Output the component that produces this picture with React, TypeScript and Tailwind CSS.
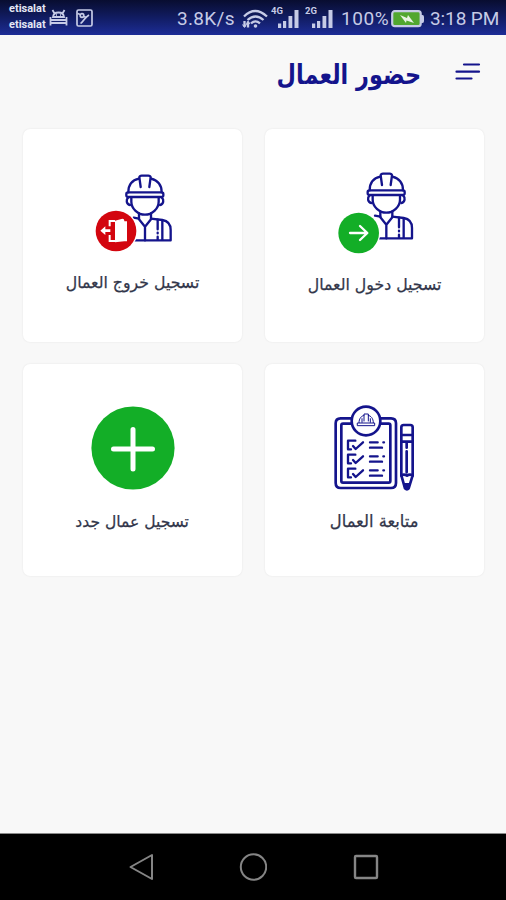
import type { ReactNode } from 'react';

const NAVY = '#14148c';

function Worker() {
  return (
    <g fill="none" stroke={NAVY} strokeWidth="7" strokeLinejoin="round" strokeLinecap="round">
      {/* helmet */}
      <path d="M144 97 C144 74 157 60 176 56 M212 56 C232 61 244 76 244 97" />
      <path d="M181 81 L177 52 Q178 47 184 47 H204 Q210 47 211 52 L207 81" />
      <rect x="138" y="97" width="111" height="14" rx="5" />
      {/* head */}
      <path d="M153 112 V125 C153 146 173 164 194 164 C215 164 235 146 235 125 V112" />
      <path d="M144 112 C136 119 138 133 149 135 M244 112 C252 119 250 133 239 135" />
      {/* jacket */}
      <path d="M176 160 V178 L194 200 L212 178 V160 M194 200 V241" />
      <path d="M160 173 L176 176 M212 176 L246 180 C264 183 271 194 271 210 V241 H160" />
      <path d="M232 179 V208 M232 218 V220 M232 230 V239 M246 182 V239" />
    </g>
  );
}

function EnterIcon() {
  return (
    <svg width="84" height="84" viewBox="29 30 252 252">
      <g transform="translate(-11 -6)">
        <Worker />
      </g>
      <circle cx="100" cy="219" r="65" fill="#fff" />
      <circle cx="100" cy="219" r="61" fill="#13ae27" />
      <path d="M74 219 H125 M104 198 L126 219 L104 240" fill="none" stroke="#fff" strokeWidth="7" strokeLinecap="round" strokeLinejoin="round" />
    </svg>
  );
}

function ExitIcon() {
  return (
    <svg width="84" height="84" viewBox="35 36 252 252">
      <Worker />
      <circle cx="107" cy="213" r="65" fill="#fff" />
      <circle cx="107" cy="213" r="61" fill="#d3060f" />
      <path d="M104 182 L126 176 Q132 176 132 182 V184 H140 V244 H132 L104 247 Z" fill="#fff" />
      <path d="M104 183 H88 V199 M88 225 V243 H104" fill="none" stroke="#fff" strokeWidth="6" />
      <path d="M60 212 L75 199 V208 H90 V216 H75 V225 Z" fill="#fff" />
    </svg>
  );
}

function ClipboardIcon() {
  return (
    <svg width="84" height="88" viewBox="37 24 252 264" fill="none" stroke={NAVY} strokeWidth="8" strokeLinecap="round" strokeLinejoin="round">
      <path d="M94 70 H60 Q45 70 45 85 V264 Q45 279 60 279 H211 Q226 279 226 264 V85 Q226 70 211 70 H178" />
      <path d="M94 86 H67 Q62 86 62 91 V258 Q62 263 67 263 H204 Q209 263 209 258 V91 Q209 86 204 86 H178" />
      <circle cx="136" cy="78" r="43" fill="#fff" />
      {/* small helmet in the badge */}
      <path d="M115 83 C115 70 122 63 130 61 M143 61 C151 63 158 70 158 83 M130 78 V57 H143 V78 M124 82 V71 M149 82 V71" strokeWidth="3" />
      <path d="M111 84 H162 V92 H111 Z" strokeWidth="3" />
      {[137, 179, 221].map((y) => (
        <g key={y} strokeWidth="7">
          <path d={`M104 ${y} H82 V${y + 26} H91`} />
          <path d={`M97 ${y + 16} L105 ${y + 25} L127 ${y + 5}`} />
          <path d={`M148 ${y + 5} H171 M188 ${y + 5} h2 M148 ${y + 21} H184`} />
        </g>
      ))}
      {/* pencil */}
      <path d="M242 242 V97 Q242 90 249 90 H269 Q276 90 276 97 V242 M242 120 H276 M242 140 H276" />
      <path d="M242 241 L253 280 Q259 286 264 280 L276 241 Q267 236 259 242 Q250 236 242 241 Z M251 268 H267 M258 142 V158 M258 169 V232" />
      <path d="M254 269 L259 280 L264 269 Z" fill={NAVY} />
    </svg>
  );
}

function PlusIcon() {
  return (
    <svg width="84" height="84" viewBox="0 0 84 84">
      <circle cx="42" cy="42" r="41.6" fill="#13ae27" />
      <path d="M42 23.5 V63 M22.5 43 H61.5" stroke="#fff" strokeWidth="5" strokeLinecap="round" />
    </svg>
  );
}

function Signal({ label }: { label: string }) {
  return (
    <svg width="30" height="26" viewBox="0 0 30 26" fill="#c6cbe6">
      <text x="0" y="8" fontFamily="Roboto, sans-serif" fontSize="9.5" fontWeight="700">{label}</text>
      <rect x="7" y="17.5" width="3.2" height="4.5" />
      <rect x="12" y="15" width="3.2" height="7" />
      <rect x="17.5" y="10" width="3.8" height="12" />
      <rect x="23.5" y="4" width="4" height="18" />
    </svg>
  );
}

function StatusBar() {
  return (
    <div dir="ltr" className="flex h-[35px] items-center bg-linear-to-b from-[#080d30] via-[#111c62] to-[#1d2d97] pr-2 pl-[9px] font-[Roboto,sans-serif] text-[#c6cbe6]">
      <div className="-mt-0.5 w-10 text-[11px] leading-[15.5px] font-bold text-[#e4e7f5]">
        <div>etisalat</div>
        <div>etisalat</div>
      </div>
      <svg width="19" height="18" viewBox="0 0 19 18" fill="none" stroke="currentColor" strokeWidth="1.8">
        <path d="M4 8 Q4.5 3.5 9.5 3.5 Q14.5 3.5 15 8 Z M5.5 4.5 L3.5 1 M13.5 4.5 L15.5 1" />
        <path d="M1.5 8 V16.5 M17.5 8 V16.5 M1.5 11 H17.5 M1.5 14 H17.5" />
        <path d="M7 6 h.8 M11.2 6 h.8" />
      </svg>
      <svg className="ml-2" width="17" height="18" viewBox="0 0 17 18" fill="none" stroke="currentColor" strokeWidth="1.7">
        <rect x="1" y="1" width="15" height="16" rx="1.5" />
        <circle cx="6" cy="6.5" r="1.8" />
        <path d="M1.5 4.5 L4.5 5.5 M7.5 7.5 L11 8.5 M4.5 14.5 C7 13.5 8 9 13 6" />
      </svg>
      <div className="mt-0.5 ml-auto flex items-center">
        <span className="mt-0.5 w-[64px] text-[19px] tracking-[0.3px] whitespace-nowrap">3.8K/s</span>
        <svg width="28" height="20" viewBox="0 0 28 20" fill="none" stroke="currentColor" strokeWidth="2.3">
          <path d="M3 7.5 Q14 -3.5 26 7.5 M6.5 11 Q14.5 4 22.5 11 M10 14.3 Q14.5 10.5 19 14.3" />
          <circle cx="14.5" cy="17" r="1.8" fill="currentColor" stroke="none" />
          <path d="M3.5 12 V18 M7 12.5 V18.5" />
          <path d="M1.5 15.5 L3.5 18 L5.5 15 L7 12.5 L9 15" strokeWidth="1.2" />
        </svg>
        <span className="ml-0.5"><Signal label="4G" /></span>
        <span className="ml-1"><Signal label="2G" /></span>
        <span className="mt-0.5 ml-[6px] w-[50px] text-[19px] tracking-[0.6px] whitespace-nowrap">100%</span>
        <svg width="34" height="18" viewBox="0 0 34 18">
          <rect x="1.2" y="1.2" width="28.5" height="15" rx="2.5" fill="#51a72f" stroke="#c6cbe6" strokeWidth="2.2" />
          <path d="M30 5 H31.5 Q33 5 33 7 V11 Q33 13 31.5 13 H30" fill="#c6cbe6" />
          <path d="M9 5 L16 8 L17 5 L23 13 L15.5 10.5 L15 13 Z" fill="#e8f3e3" />
        </svg>
        <span className="mt-0.5 ml-[5px] w-[68px] text-[19px] tracking-[-0.1px] whitespace-nowrap">3:18 PM</span>
      </div>
    </div>
  );
}

type CardProps = {
  icon: ReactNode;
  label: string;
  iconClass: string;
  labelClass: string;
};

function Card({ icon, label, iconClass, labelClass }: CardProps) {
  return (
    <button className="flex flex-col items-center rounded-[7px] bg-white shadow-[0_0_2px_rgba(0,0,0,0.09)]">
      <span className={iconClass}>{icon}</span>
      <span className={`scale-x-[0.96] leading-6 whitespace-nowrap text-[#32364a] [-webkit-text-stroke:0.25px_#32364a] ${labelClass}`}>{label}</span>
    </button>
  );
}

export default function App() {
  return (
    <div dir="rtl" className="flex h-[900px] w-[506px] flex-col overflow-hidden bg-[#f8f8f8] font-['DejaVu_Sans',sans-serif]">
      <StatusBar />

      <header className="flex h-[94px] items-start pt-6 pr-[25px]">
        <svg className="mt-[3px]" width="27" height="20" viewBox="0 0 27 20" stroke={NAVY} strokeWidth="2.2" strokeLinecap="round">
          <path d="M10 2.5 H25 M2.5 9.7 H25 M2.5 16.5 H17.5" />
        </svg>
        <h1 className="mr-[33px] origin-right scale-x-[0.83] text-[27px] leading-8 font-bold whitespace-nowrap text-[#14148c]">حضور العمال</h1>
      </header>

      <main className="grid grid-cols-[219px_219px] grid-rows-[213px_212px] gap-x-[23px] gap-y-[22px] pr-[22px]">
        <Card icon={<EnterIcon />} label="تسجيل دخول العمال" iconClass="mt-[41px] ml-1" labelClass="mt-[19px] text-[16.4px]" />
        <Card icon={<ExitIcon />} label="تسجيل خروج العمال" iconClass="mt-[43px] ml-0.5" labelClass="mt-[15px] text-[16.4px]" />
        <Card icon={<ClipboardIcon />} label="متابعة العمال" iconClass="mt-[39px]" labelClass="mt-[18px] text-[17px]" />
        <Card icon={<PlusIcon />} label="تسجيل عمال جدد" iconClass="mt-[42px]" labelClass="mt-[20px] text-[16.2px]" />
      </main>

      <nav dir="ltr" className="mt-auto flex h-[67px] items-center justify-center gap-[84px] border-t border-[#8a8a8a] bg-black">
        <svg width="28" height="28" viewBox="0 0 28 28" fill="none" stroke="#858585" strokeWidth="2" strokeLinejoin="round">
          <path d="M3.5 14 L25 2 V26 Z" />
        </svg>
        <svg width="28" height="28" viewBox="0 0 28 28" fill="none" stroke="#858585" strokeWidth="2">
          <circle cx="14.5" cy="14" r="12.7" />
        </svg>
        <svg width="28" height="28" viewBox="0 0 28 28" fill="none" stroke="#858585" strokeWidth="2.4">
          <rect x="4" y="3" width="22" height="22" rx="1" />
        </svg>
      </nav>
    </div>
  );
}
